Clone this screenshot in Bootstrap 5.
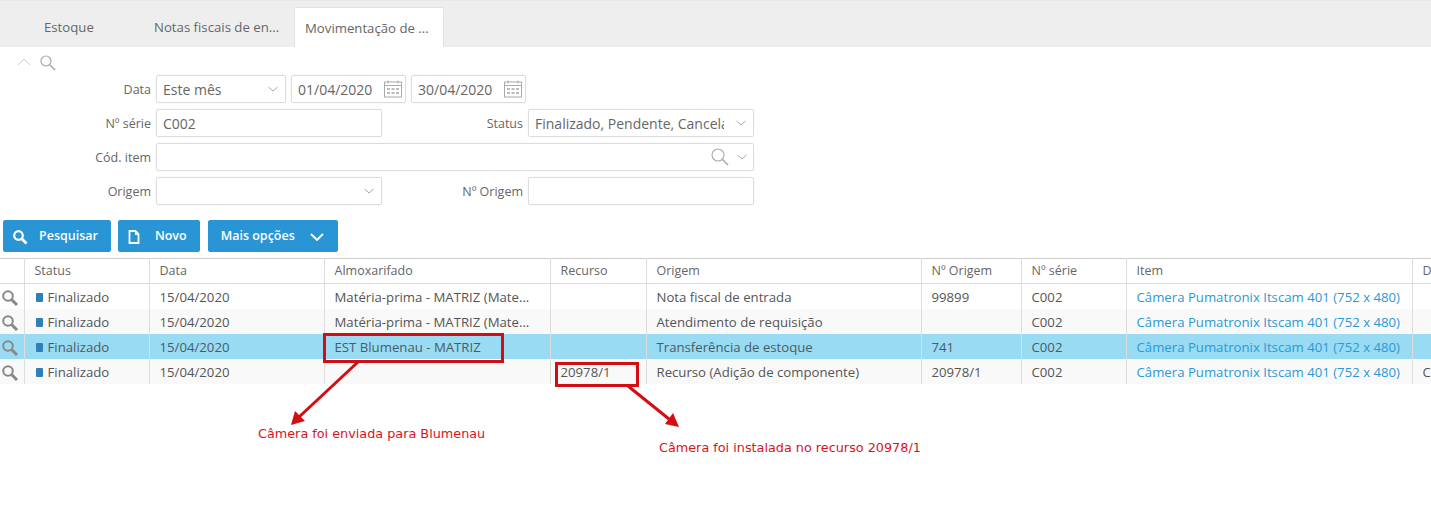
<!DOCTYPE html>
<html lang="pt-BR">
<head>
    <meta charset="UTF-8">
    <meta name="viewport" content="width=device-width, initial-scale=1.0">
    <title>Movimentação de estoque</title>
    <link href="https://cdn.jsdelivr.net/npm/bootstrap@5.3.0/dist/css/bootstrap.min.css" rel="stylesheet">
    <style>
        html, body { height: 519px; overflow: hidden; }
        body { position: relative; font-family: "Open Sans", "Liberation Sans", sans-serif; font-size: 13px; color: #555; background: #fff; }
        .tab-strip { height: 47px; background: #eee; padding-top: 6px; border-top: 1px solid #e8e6e8; }
        .tab-item { height: 40px; line-height: 41px; padding: 0 10px; color: #666; white-space: nowrap; font-size: 13.2px; }
        .tab-item.tab-first { width: 130px; padding-left: 44px; }
        .tab-item.tab-second { width: 164px; padding-left: 24px; }
        .tab-item.tab-on { width: 150px; background: #fff; border: 1px solid #e2e2e2; border-bottom: 0; border-radius: 2px 2px 0 0; }
        .tool-line { height: 28px; padding: 8px 0 0 17px; gap: 8px; }
        .tool-glass { margin-top: -1px; }
        .filter-form { display: flex; flex-direction: column; gap: 6px; }
        .filter-line { display: flex; align-items: center; height: 28px; }
        .filter-line label { padding-top: 2px; }
        .lbl-main { width: 151px; text-align: right; margin-right: 5px; color: #666; font-size: 12.5px; }
        .lbl-side { width: 141px; text-align: right; margin-right: 5px; color: #666; font-size: 12.5px; }
        .filter-form .form-control, .filter-form .form-select {
            height: 28px; min-height: 28px; padding: 0 6px; font-size: 14px; color: #666; border: 1px solid #ddd; border-radius: 2px; box-shadow: 0 0 2px #f0f0f0;
        }
        .filter-form .form-select {
            padding-right: 29px; background-position: right 6px center; background-size: 12px 10px;
            --bs-form-select-bg-img: url("data:image/svg+xml,%3csvg xmlns='http://www.w3.org/2000/svg' viewBox='0 0 12 10'%3e%3cpath fill='none' stroke='%23aaa' d='M1.5 3l4.5 4 4.5-4'/%3e%3c/svg%3e");
        }
        .w-226 { width: 226px; flex: none; }
        .w-130 { width: 130px; flex: none; margin-right: 5px; }
        .w-115 { width: 115px; flex: none; position: relative; }
        .w-115.gap-after { margin-right: 5px; }
        .w-598 { width: 598px; flex: none; position: relative; }
        .field-icon { position: absolute; top: 50%; transform: translateY(-50%); right: 3px; }
        .field-icon.icon-glass { right: 24px; }
        .field-icon.icon-chev { right: 6px; }
        .btn-line { margin-top: 15px; padding-left: 3px; gap: 7px; height: 32px; }
        .btn-azul { display: flex; align-items: center; height: 32px; padding: 1px 12px 0; background: #2a95d5; border: 1px solid #2a95d5; color: #fff; font-size: 12.5px; font-weight: 600; border-radius: 2px; }
        .btn-azul:hover { background: #2a95d5; color: #fff; border-color: #2a95d5; }
        .btn-azul.btn-busca { padding-left: 8px; }
        .btn-azul.btn-novo { padding-left: 7px; }
        .btn-busca svg { margin-right: 11px; }
        .btn-novo svg { margin-right: 13px; }
        .btn-mais { margin-left: 1px; }
        .btn-mais svg { margin-left: 14px; }
        .table-wrap { margin-top: 6px; }
        .mov-table { table-layout: fixed; width: 1431px; margin: 0; font-size: 13.2px; color: #555; border-top: 1px solid #ccc; }
        .mov-table > :not(caption) > * > * { padding: 0 10px; height: 25px; line-height: 24px; white-space: nowrap; overflow: hidden; border-bottom: 0; border-right: 1px solid #ddd; background: transparent; box-shadow: none; color: inherit; vertical-align: middle; }
        .mov-table > tbody > tr > td { padding-top: 1px; }
        .mov-table > thead > tr > th { font-weight: 400; height: 25px; border-bottom: 1px solid #ddd; font-size: 12.5px; color: #666; }
        .mov-table > :not(caption) > * > .cell-icon { padding: 0 0 0 1px; }
        .mov-table > tbody > tr > .cell-icon { padding-top: 1px; }
        .mov-table > :not(caption) > * > .cell-last { border-right: 0; }
        .mov-table tr.zebra { background: #f9f9f9; }
        .mov-table tr.row-sel { background: #99dbf3; color: #4a5b66; }
        .mov-table a { color: #2a9ad6; text-decoration: none; }
        .status-dot { display: inline-block; width: 7px; height: 9px; background: #2f7fb8; border-radius: 1px; margin-left: 1px; margin-right: 5px; }
        .ann-box { position: absolute; border: 3px solid #d40d12; }
        .ann-box.box-alm { left: 323px; top: 333px; width: 181px; height: 30px; }
        .ann-box.box-rec { left: 555px; top: 362px; width: 84px; height: 25px; }
        .ann-text { position: absolute; color: #d8141c; font-family: "DejaVu Sans", sans-serif; font-size: 12.8px; white-space: nowrap; line-height: 16px; }
        .ann-text.txt-alm { left: 258px; top: 426px; }
        .ann-text.txt-rec { left: 659px; top: 440px; }
        .ann-lines { position: absolute; left: 0; top: 0; }
    </style>
</head>
<body>
    <div class="tab-strip d-flex">
        <div class="tab-item tab-first">Estoque</div>
        <div class="tab-item tab-second">Notas fiscais de en...</div>
        <div class="tab-item tab-on">Movimentação de ...</div>
    </div>

    <div class="tool-line d-flex align-items-start">
        <svg width="14" height="14" viewBox="0 0 14 14"><path d="M1 10l6-6 6 6" fill="none" stroke="#ccc" stroke-width="1"/></svg>
        <svg class="tool-glass" width="18" height="18" viewBox="0 0 18 18"><circle cx="7" cy="7" r="5" fill="none" stroke="#aaa" stroke-width="1.2"/><path d="M11 11l5 5" stroke="#aaa" stroke-width="1.6"/></svg>
    </div>

    <form class="filter-form">
        <div class="filter-line">
            <label class="lbl-main">Data</label>
            <select class="form-select w-130"><option>Este mês</option></select>
            <div class="w-115 gap-after">
                <input class="form-control" value="01/04/2020">
                <svg class="field-icon" width="20" height="20" viewBox="0 0 20 20"><rect x="1.5" y="3" width="17" height="15" fill="#fff" stroke="#aaa"/><path d="M2 6.5h16" stroke="#aaa"/><path d="M5 1.500v3M15 1.500v3" stroke="#aaa"/><path d="M4 9h3v2H4zM8.500 9h3v2h-3zM13 9h3v2h-3zM4 13h3v2H4zM8.500 13h3v2h-3zM13 13h3v2h-3z" fill="#bbb"/></svg>
            </div>
            <div class="w-115">
                <input class="form-control" value="30/04/2020">
                <svg class="field-icon" width="20" height="20" viewBox="0 0 20 20"><rect x="1.5" y="3" width="17" height="15" fill="#fff" stroke="#aaa"/><path d="M2 6.5h16" stroke="#aaa"/><path d="M5 1.500v3M15 1.500v3" stroke="#aaa"/><path d="M4 9h3v2H4zM8.500 9h3v2h-3zM13 9h3v2h-3zM4 13h3v2H4zM8.500 13h3v2h-3zM13 13h3v2h-3z" fill="#bbb"/></svg>
            </div>
        </div>
        <div class="filter-line">
            <label class="lbl-main">Nº série</label>
            <input class="form-control w-226" value="C002">
            <label class="lbl-side">Status</label>
            <select class="form-select w-226"><option>Finalizado, Pendente, Cancelado</option></select>
        </div>
        <div class="filter-line">
            <label class="lbl-main">Cód. item</label>
            <div class="w-598">
                <input class="form-control">
                <svg class="field-icon icon-glass" width="20" height="20" viewBox="0 0 20 20"><circle cx="8" cy="8" r="6" fill="none" stroke="#aaa" stroke-width="1.1"/><path d="M12.500 12.500l5.500 5.500" stroke="#aaa" stroke-width="1.6"/></svg>
                <svg class="field-icon icon-chev" width="12" height="10" viewBox="0 0 12 10"><path d="M1.500 3l4.500 4 4.500-4" fill="none" stroke="#aaa"/></svg>
            </div>
        </div>
        <div class="filter-line">
            <label class="lbl-main">Origem</label>
            <select class="form-select w-226"><option></option></select>
            <label class="lbl-side">Nº Origem</label>
            <input class="form-control w-226">
        </div>
    </form>

    <div class="btn-line d-flex">
        <button type="button" class="btn btn-azul btn-busca">
            <svg width="16" height="16" viewBox="0 0 16 16"><circle cx="6.500" cy="6.500" r="4.300" fill="none" stroke="#fff" stroke-width="2.200"/><path d="M10 10l4.500 4.500" stroke="#fff" stroke-width="2.800"/></svg>Pesquisar
        </button>
        <button type="button" class="btn btn-azul btn-novo">
            <svg width="16" height="16" viewBox="0 0 16 16"><path d="M3.500 2h6l3 3v9h-9z" fill="none" stroke="#fff" stroke-width="1.800"/><path d="M9 2v4h4" fill="#fff"/></svg>Novo
        </button>
        <button type="button" class="btn btn-azul btn-mais">
            Mais opções
            <svg width="16" height="16" viewBox="0 0 16 16"><path d="M2 5l6 6 6-6" fill="none" stroke="#fff" stroke-width="1.800"/></svg>
        </button>
    </div>

    <div class="table-wrap">
        <table class="table mov-table">
            <colgroup>
                <col><col><col><col><col><col><col><col><col><col>
            </colgroup>
            <thead>
                <tr><th class="cell-icon"></th><th>Status</th><th>Data</th><th>Almoxarifado</th><th>Recurso</th><th>Origem</th><th>Nº Origem</th><th>Nº série</th><th>Item</th><th class="cell-last">Descrição</th></tr>
            </thead>
            <tbody id="linhas"></tbody>
        </table>
    </div>

    <div class="ann-box box-alm"></div>
    <div class="ann-box box-rec"></div>
    <svg class="ann-lines" width="1431" height="519">
        <path d="M358 362L299 417" stroke="#d40d12" stroke-width="3"/>
        <path d="M291 425l4-14 10 10z" fill="#d40d12"/>
        <path d="M628 386L669 419" stroke="#d40d12" stroke-width="3"/>
        <path d="M679 427l-14-3 8-11z" fill="#d40d12"/>
    </svg>
    <div class="ann-text txt-alm">Câmera foi enviada para Blumenau</div>
    <div class="ann-text txt-rec">Câmera foi instalada no recurso 20978/1</div>

    <script src="https://cdn.jsdelivr.net/npm/bootstrap@5.3.0/dist/js/bootstrap.bundle.min.js"></script>
    <script>
        const item = 'Câmera Pumatronix Itscam 401 (752 x 480)';
        const larguras = [24, 125, 175, 226, 96, 275, 100, 105, 286];
        document.querySelectorAll('.mov-table col').forEach((c, i) => { if (larguras[i]) c.style.width = larguras[i] + 'px'; });
        const linhas = [
            { alm: 'Matéria-prima - MATRIZ (Mate...', rec: '', ori: 'Nota fiscal de entrada', num: '99899', cls: '', ult: '' },
            { alm: 'Matéria-prima - MATRIZ (Mate...', rec: '', ori: 'Atendimento de requisição', num: '', cls: 'zebra', ult: '' },
            { alm: 'EST Blumenau - MATRIZ', rec: '', ori: 'Transferência de estoque', num: '741', cls: 'row-sel', ult: '' },
            { alm: '', rec: '20978/1', ori: 'Recurso (Adição de componente)', num: '20978/1', cls: 'zebra', ult: 'Câmera' }
        ];
        const lupa = '<svg width="18" height="18" viewBox="0 0 18 18"><circle cx="7" cy="7" r="4.800" fill="none" stroke="#888" stroke-width="2"/><path d="M10.500 10.500l5.500 5.500" stroke="#888" stroke-width="3"/></svg>';
        document.getElementById('linhas').innerHTML = linhas.map(l => `
            <tr class="${l.cls}">
                <td class="cell-icon">${lupa}</td>
                <td><span class="status-dot"></span>Finalizado</td>
                <td>15/04/2020</td>
                <td>${l.alm}</td>
                <td>${l.rec}</td>
                <td>${l.ori}</td>
                <td>${l.num}</td>
                <td>C002</td>
                <td><a href="#">${item}</a></td>
                <td class="cell-last">${l.ult}</td>
            </tr>`).join('');
    </script>
</body>
</html>
